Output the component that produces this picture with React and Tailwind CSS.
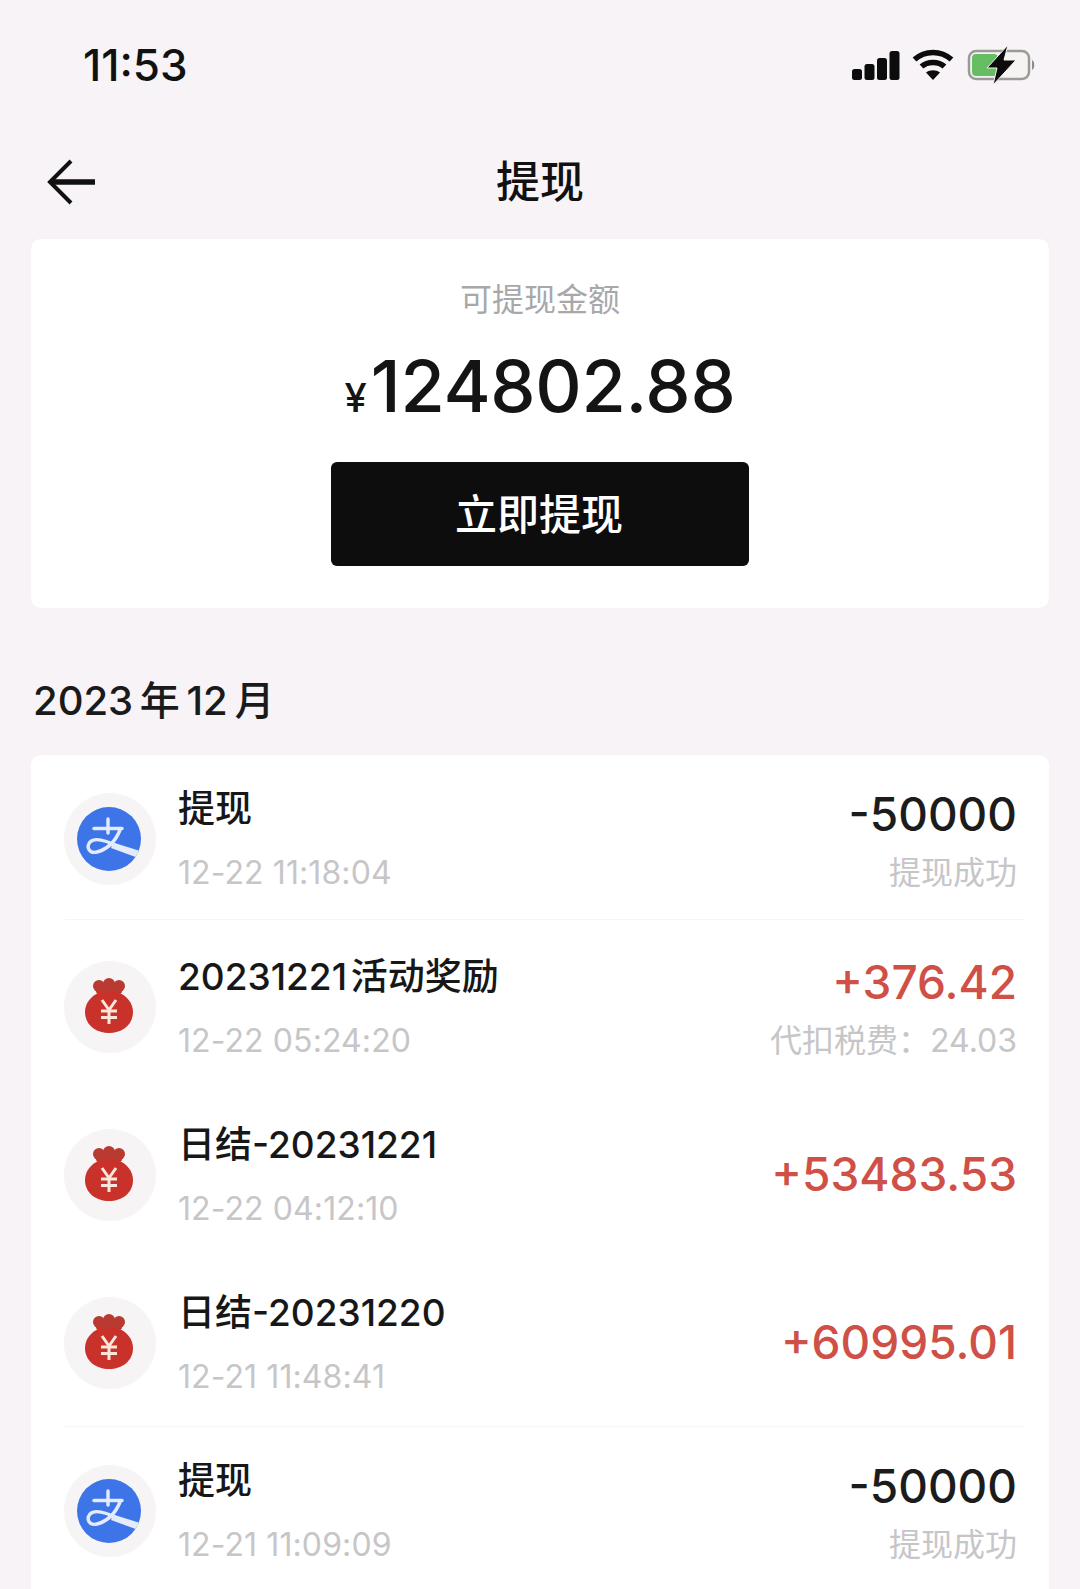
const FONT = { fontFamily: '"Inter","Noto Sans CJK SC",sans-serif' };

function Signal() {
  return (
    <svg width="50" height="30" viewBox="0 0 50 30" fill="#0c0c0c" className="mr-[11px]">
      <rect x="1" y="19" width="10" height="11" rx="2.5" />
      <rect x="13.5" y="14" width="10" height="16" rx="2.5" />
      <rect x="26" y="8" width="10" height="22" rx="2.5" />
      <rect x="38.5" y="1" width="10" height="29" rx="2.5" />
    </svg>
  );
}

function Wifi() {
  return (
    <svg width="42" height="32" viewBox="0 0 42 32" fill="none" stroke="#0c0c0c" strokeWidth="5.5" className="mr-[13px]">
      <path d="M2.5 10.5C13 1 29 1 39.5 10.5" />
      <path d="M9.5 17.5C15.5 12 26.5 12 32.5 17.5" />
      <path d="M21 31L14 23.5C18 20.5 24 20.5 28 23.5Z" fill="#0c0c0c" stroke="none" />
    </svg>
  );
}

function Battery() {
  return (
    <svg width="70" height="40" viewBox="0 0 70 40" fill="none">
      <rect x="2" y="6" width="60" height="28" rx="7" stroke="#9a9a98" strokeWidth="2.5" fill="#f5f4f3" />
      <rect x="5" y="9" width="26" height="22" rx="4" fill="#67bd62" />
      <path d="M65 15C68 16 68 24 65 25Z" fill="#8d8d8d" />
      <path d="M41 0L20 23H30L26 40L49 15H37Z" fill="#0c0c0c" stroke="#f6f3f6" strokeWidth="1" />
    </svg>
  );
}

function Back() {
  return (
    <svg width="50" height="46" viewBox="0 0 50 46" fill="none" stroke="#111">
      <path d="M4 23H48" strokeWidth="5.5" />
      <path d="M24 2L3 23L24 44" strokeWidth="4" />
    </svg>
  );
}

function AlipayIcon() {
  return (
    <svg width="64" height="64" viewBox="0 0 64 64" className="mr-[3px] mb-[1px]">
      <defs>
        <clipPath id="alipay-disc">
          <circle cx="32" cy="32" r="32" />
        </clipPath>
      </defs>
      <circle cx="32" cy="32" r="32" fill="#3d74e8" />
      <g clipPath="url(#alipay-disc)">
        <g fill="none" stroke="#e4ecfc" strokeWidth="3.4" strokeLinecap="round">
          <path d="M31 12V26" />
          <path d="M17 21.5H45" />
          <path d="M43 23C39 33 31 42 20 45C12 47 9 40 13 35C18 30 28 33 40 39" />
        </g>
        <path d="M36 35.5L66 45L64 52L34 41Z" fill="#e4ecfc" />
      </g>
    </svg>
  );
}

function BagIcon() {
  return (
    <svg width="50" height="56" viewBox="0 0 50 56" className="mr-[3px] mb-[3px]">
      <g fill="#b93a31">
        <circle cx="15" cy="8" r="6" />
        <circle cx="25" cy="6" r="6" />
        <circle cx="35" cy="8" r="6" />
        <rect x="12" y="8" width="26" height="8" rx="3" />
      </g>
      <path d="M16 14H34C43 18 49 25 49 34C49 47 38 55 25 55C12 55 1 47 1 34C1 25 7 18 16 14Z" fill="#c9322a" />
      <g fill="none" stroke="#fbe6dc" strokeWidth="3">
        <path d="M18 22L25 32L32 22" />
        <path d="M25 32V46" />
        <path d="M17 33H33" />
        <path d="M17 39.5H33" />
      </g>
    </svg>
  );
}

const rows = [
  { icon: "a", title: "提现", time: "12-22 11:18:04", amount: "-50000", sub: "提现成功", line: "bottom-[3px]" },
  { icon: "b", title: "20231221 活动奖励", time: "12-22 05:24:20", amount: "+376.42", sub: "代扣税费：24.03" },
  { icon: "b", title: "日结-20231221", time: "12-22 04:12:10", amount: "+53483.53" },
  { icon: "b", title: "日结-20231220", time: "12-21 11:48:41", amount: "+60995.01", line: "bottom-0" },
  { icon: "a", title: "提现", time: "12-21 11:09:09", amount: "-50000", sub: "提现成功" },
];

function Row({ r }) {
  const negative = r.amount.startsWith("-");
  return (
    <div className="h-[168px] relative flex items-center pl-[33px] pr-[32px]">
      <div className="w-[92px] h-[92px] rounded-full bg-[#f7f4f6] flex items-center justify-center shrink-0">
        {r.icon === "a" ? <AlipayIcon /> : <BagIcon />}
      </div>
      <div className="ml-[22px] flex-1 flex flex-col gap-[16px] pt-[4px]">
        <div className="text-[37px] leading-[48px] font-medium [word-spacing:-6px] text-[#171717]">{r.title}</div>
        <div className="text-[32px] leading-[48px] tracking-[0.1px] text-[#c6c6c8]">{r.time}</div>
      </div>
      <div className={`flex flex-col items-end ${r.sub ? "gap-[5px] pt-[2px]" : "pb-[3px]"}`}>
        <div className={`text-[46px] leading-[60px] font-medium ${negative ? "text-[#1c1c1c]" : "text-[#cf5047]"}`}>{r.amount}</div>
        {r.sub && <div className="text-[32px] leading-[48px] text-[#c6c6c8]">{r.sub}</div>}
      </div>
      {r.line && <div className={`absolute left-[34px] right-[24px] h-px bg-[#f7f5f6] ${r.line}`} />}
    </div>
  );
}

export default function App() {
  return (
    <div style={FONT} className="w-[1080px] h-[1589px] overflow-hidden bg-[#f7f3f6] text-[#111]">
      <div className="h-[129px] flex items-center justify-between pl-[83px] pr-[43px]">
        <div className="text-[44px] font-medium leading-none">11:53</div>
        <div className="flex items-center">
          <Signal />
          <Wifi />
          <Battery />
        </div>
      </div>
      <div className="relative h-[110px] flex items-center justify-center pb-[4px]">
        <div className="absolute left-[47px] top-[30px]"><Back /></div>
        <div className="text-[44px] font-medium leading-none">提现</div>
      </div>
      <div className="mx-[31px] h-[369px] bg-white rounded-[10px] flex flex-col items-center pt-[41px]">
        <div className="text-[32px] leading-[40px] text-[#a8a8aa]">可提现金额</div>
        <div className="mt-[30px] flex items-baseline leading-none text-[#141414]">
          <span className="text-[40px] font-medium mr-[4px]">¥</span>
          <span className="text-[72px] font-medium tracking-[-0.3px]">124802.88</span>
        </div>
        <div className="mt-[40px] w-[418px] h-[104px] rounded-[6px] bg-[#0d0d0d] flex items-center justify-center text-white text-[42px] font-medium pr-[2px]">
          立即提现
        </div>
      </div>
      <div className="pl-[33px] pt-[66px] pb-[27px] text-[40px] leading-[54px] font-medium [word-spacing:-4px] text-[#1a1a1a]">2023 年 12 月</div>
      <div className="mx-[31px] bg-white rounded-t-[10px]">
        {rows.map((r) => <Row key={r.time} r={r} />)}
      </div>
    </div>
  );
}
